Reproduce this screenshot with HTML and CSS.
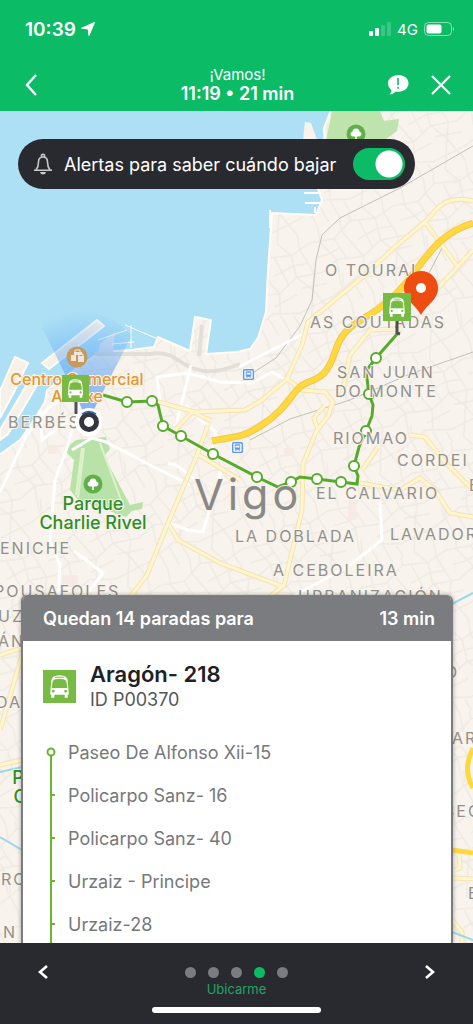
FILE: index.html
```
<!DOCTYPE html>
<html lang="es">
<head>
    <meta charset="utf-8">
    <meta name="viewport" content="width=device-width, initial-scale=1">
    <title>¡Vamos! - 21 min</title>
    <link rel="stylesheet" href="styles.css">
</head>
<body>

<header class="top">
    <div class="status">
        <span class="clock">10:39
            <svg width="14" height="14" viewBox="0 0 14 14"><path d="M13.500.5 8 13.500 7.200 7 .5 6.200Z" fill="#fff" stroke="#fff"/></svg>
        </span>
        <span class="signal">
            <svg width="22" height="14" viewBox="0 0 22 14" fill="#fff">
                <rect x="0" y="9" width="4" height="5" rx="1"/>
                <rect x="6" y="6" width="4" height="8" rx="1"/>
                <rect x="12" y="3" width="4" height="11" rx="1" opacity=".2"/>
                <rect x="18" y="0" width="4" height="14" rx="1" opacity=".2"/>
            </svg>
            4G
            <svg width="31" height="14" viewBox="0 0 31 14">
                <rect x=".5" y=".5" width="27" height="13" rx="4" fill="none" stroke="#fff" opacity=".5"/>
                <rect x="2.500" y="2.500" width="15" height="9" rx="2" fill="#fff"/>
                <path d="M29 5q2 2 0 4z" fill="#fff" opacity=".6"/>
            </svg>
        </span>
    </div>
    <div class="bar">
        <button class="icon-btn" type="button" aria-label="Atrás">
            <svg width="14" height="22" viewBox="0 0 14 22"><path d="M12 1 3 11 12 21" fill="none" stroke="#fff" stroke-width="2.400"/></svg>
        </button>
        <h1 class="title"><small>¡Vamos!</small>11:19 • 21 min</h1>
        <div class="actions">
            <button class="icon-btn" type="button" aria-label="Informar">
                <svg width="22" height="22" viewBox="0 0 22 22">
                    <path d="M11.500 1C17.500 1 21.500 4.700 21.500 9.300s-4 8.400-10 8.400q-1.500 0-2.500-.2-2.400 2.500-6.500 3 2-2 2-4.500Q1 13.500 1 9.300C1 4.700 5.500 1 11.500 1Z" fill="#fff"/>
                    <path d="M11 4V11M11 12.800v2" stroke="#0cbb66" stroke-width="1.600"/>
                </svg>
            </button>
            <button class="icon-btn" type="button" aria-label="Cerrar">
                <svg width="20" height="20" viewBox="0 0 20 20"><path d="M1 1 19 19M19 1 1 19" stroke="#fff" stroke-width="2.200"/></svg>
            </button>
        </div>
    </div>
</header>

<main class="screen">
    <svg class="map" viewBox="0 111 473 832" preserveAspectRatio="xMidYMin slice">
        <defs>
            <pattern id="streets" width="92" height="84" patternUnits="userSpaceOnUse" patternTransform="rotate(-24)">
                <path d="M0 12 24 18 46 8 70 16 92 12M0 44 18 38 44 46 66 38 92 44M0 70 30 62 54 72 92 70M14 0 10 16 18 38 12 62 14 84M38 0 34 14 44 46 36 66 38 84M62 0 70 16 66 38 76 56 62 84M84 0 80 14 84 42 76 56 84 84M24 18 28 42M54 12 56 42M34 56 60 54M0 28 14 30 26 28M46 28 68 26 82 30M18 52 14 64M66 50 92 56M24 64 26 84M48 72 50 84M48 0 46 8" fill="none" stroke="#eeeae3" stroke-width="1.500"/>
            </pattern>
            <radialGradient id="cone" gradientUnits="userSpaceOnUse" cx="88" cy="421" r="110">
                <stop offset="0" stop-color="#4a8ff0" stop-opacity=".7"/>
                <stop offset=".6" stop-color="#56a0f5" stop-opacity=".45"/>
                <stop offset="1" stop-color="#56a0f5" stop-opacity="0"/>
            </radialGradient>
            <symbol id="bus" viewBox="0 0 32 32">
                <rect width="32" height="32" fill="#78bb43"/>
                <path d="M8 11Q8 5 16 5T24 11L25 23Q25 24 24 24H8Q7 24 7 23Z" fill="#fff"/>
                <path d="M10 10.500Q12 9 16 9T22 10.500L23 17H9ZM12 7H20" fill="#78bb43" stroke="#78bb43" stroke-width="1"/>
                <path d="M9.500 23V27M22.500 23V27" stroke="#fff" stroke-width="3"/>
                <circle cx="10" cy="20.500" r="1.300" fill="#78bb43"/>
                <circle cx="22" cy="20.500" r="1.300" fill="#78bb43"/>
            </symbol>
            <symbol id="tree" viewBox="0 0 20 20">
                <circle cx="10" cy="10" r="9.500" fill="#5fb04a"/>
                <path d="M9 16 9.300 12.500Q5 13 4.500 10 4.500 8 6.500 7.500 7 4.500 10 4.500T13.500 7.500Q15.500 8 15.500 10 15 13 10.700 12.500L11 16Z" fill="#fff"/>
            </symbol>
            <symbol id="station" viewBox="0 0 12 12">
                <rect width="12" height="12" rx="2" fill="#5b98f2"/>
                <rect x="1.500" y="1.500" width="9" height="9" rx="1" fill="#fff"/>
                <path d="M3.500 3H8.500V8H3.500ZM3.500 10 5 8.500M8.500 10 7 8.500" fill="#5b98f2" stroke="#5b98f2"/>
                <path d="M4 4H8V6H4Z" fill="#fff"/>
            </symbol>
            <symbol id="first-stop" viewBox="0 0 16 43">
                <path d="M8 22V43" stroke="#6ab536" stroke-width="2"/>
                <circle cx="8" cy="21" r="3.500" fill="#fff" stroke="#6ab536" stroke-width="2"/>
            </symbol>
            <symbol id="next-stop" viewBox="0 0 16 43">
                <path d="M8 0V43M8 21H12" stroke="#6ab536" stroke-width="2"/>
            </symbol>
        </defs>

        <rect y="111" width="473" height="832" fill="#f8f4ed"/>
        <rect y="111" width="473" height="832" fill="url(#streets)"/>

        <!-- sea -->
        <path d="M-5 105H333L324 128 325 150 318 189 322 200 316 215 272 213 268 270 266 312 258 338 250 349 237 352 206 354 211 320 195 317 190 351 158 337 154 347 131 350 100 352 66 376 47 390 45 402 34 420 20 440 -5 458Z" fill="#ade0f5" stroke="#fffdf8" stroke-width="2"/>
        <path d="M270 228V210M315 213V207M304 193H320M305 203H320" fill="none" stroke="#fff" stroke-width="2"/>
        <path d="M303 140 305 122 311 123 317 140Z" fill="#f8f4ed"/>
        <path d="M42 363 97 320 104 326 49 369ZM15 357 28 363 14 392 0 418V391ZM26 386 34 375 40 380 8 434 0 440V430Z" fill="#f5f0e8" stroke="#fffdf8" stroke-width="2"/>
        <path d="M100 344 115 332 113 352 98 352Z" fill="#e0e4ed"/>
        <path d="M125 325 158 339M131 325V348M98 340 127 330M112 344 134 342" fill="none" stroke="#fff" stroke-width="1"/>
        <path d="M199 356 202 325M95 354H150Q166 351 178 360T204 371 240 364" fill="none" stroke="#e3dfd8" stroke-width="4"/>

        <!-- parks -->
        <path d="M332 111H380L384 121 399 119 397 131 386 139 350 150H324Z" fill="#bfe3ac"/>
        <path d="M64 450 76 440 106 437 110 449 104 456 130 505 143 502 142 509 132 511 126 517 78 500 70 490 74 460Z" fill="#b9e2a9"/>
        <path d="M76 495 82 448M100 443 124 508M84 448 78 498" fill="none" stroke="#dff0cf" stroke-width="2"/>
        <path d="M48 445h9v9h-9zM284 448h10v8h-10zM348 500h8v20h-8zM62 575h16v12h-16z" fill="#f7eae5"/>

        <!-- railway -->
        <path d="M473 146 400 188 340 218 322 235 316 260 312 300 300 326 276 358 254 372M250 440 290 419 350 400 410 374 473 352M428 275 442 248" fill="none" stroke="#c2c0bc" stroke-width="1"/>

        <g class="white-roads">
            <path d="M0 492 26 436 48 408 66 395M80 400 68 445 55 480 50 540 60 565 58 600M40 410 42 440 62 425 76 416M72 450 92 438 106 442 148 464 190 485M168 463 176 465 194 478"/>
            <path d="M160 402 157 377 188 373 220 382 252 383 272 372 286 380M175 430 191 365M186 405 206 425 216 432 212 450M169 523 188 530 203 532 222 468"/>
            <path d="M239 367 305 333 296 357 286 380M380 502 382 540 350 565 290 598M74 551 103 573 86 595"/>
        </g>
        <g class="road-edge">
            <path id="roads" d="M473 201Q448 195 435 211L425 222 395 247 365 275 308 322 302 345 287 379 262 400 245 410 195 412 155 401M425 222 458 267M473 250 440 286 425 300M402 329 370 330 350 355 342 395M287 379 302 390 325 392 333 402 328 416 316 432 303 464 302 510 284 585 260 605M318 430 314 418 325 405M175 430 192 412 212 421M168 523 197 455 208 425M168 523 178 540 220 563 284 587M168 523 147 575 128 600M199 455 240 480M410 435 425 437 445 462 473 490M360 483 400 490 420 478 435 490 450 513 473 517M362 470 378 447M0 655 22 648M0 730 22 655M0 765 22 760M455 870 460 868 459 855M453 878 473 879M452 920 462 932 462 943"/>
        </g>
        <use href="#roads" class="road-fill"/>
        <path d="M473 223C430 236 422 270 393 297S345 320 335 352 310 378 300 387 285 410 262 425 233 436 212 441" fill="none" stroke="#f3c650" stroke-width="7"/>
        <path d="M473 223C430 236 422 270 393 297S345 320 335 352 310 378 300 387 285 410 262 425 233 436 212 441M473 748Q462 770 473 788M452 850 473 853" fill="none" stroke="#ffd83e" stroke-width="5"/>
        <path d="M452 604 473 593M0 772 22 767M0 837 22 850M452 932 473 940" fill="none" stroke="#9cd8e8" stroke-width="2"/>

        <path d="M88 421 36 315Q90 295 132 335Z" fill="url(#cone)"/>
        <use href="#station" x="243" y="369" width="11" height="11"/>
        <use href="#station" x="232" y="442" width="11" height="11"/>
        <use href="#tree" x="346" y="124" width="20" height="20"/>
        <use href="#tree" x="83" y="474" width="20" height="20"/>
        <circle cx="77" cy="357" r="10.500" fill="#c79a5c"/>
        <path d="M71 355H76V361H71ZM78 356H84V362H78ZM74 352H82V355H74Z" fill="#eee7df"/>
        <path d="M75 353V350H80V353M79 356V354H83V356" fill="none" stroke="#eee7df"/>

        <!-- route -->
        <path d="M103 395 127 402 152 401 158 405 163 426 181 436 213 454 257 477 278 487 291 482 300 477 317 479 341 482 357 484 358 476 354 466 359 447 366 431 372 416 373 405 369 394 366 371 376 358 398 333" fill="none" stroke="#58aa2c" stroke-width="3"/>
        <g class="stops">
            <circle cx="127" cy="402" r="5"/><circle cx="152" cy="401" r="5"/>
            <circle cx="163" cy="426" r="5"/><circle cx="181" cy="436" r="5"/>
            <circle cx="213" cy="454" r="5"/><circle cx="257" cy="477" r="5"/>
            <circle cx="291" cy="482" r="5"/><circle cx="317" cy="479" r="5"/>
            <circle cx="341" cy="482" r="5"/><circle cx="354" cy="466" r="5"/>
            <circle cx="366" cy="431" r="5"/><circle cx="369" cy="394" r="5"/>
            <circle cx="376" cy="358" r="5"/>
        </g>

        <g class="district">
            <text x="325" y="276">O TOURAL</text>
            <text x="310" y="328">AS COUTADAS</text>
            <text x="337" y="378">SAN JUAN</text>
            <text x="335" y="397">DO MONTE</text>
            <text x="333" y="444">RIOMAO</text>
            <text x="397" y="466">CORDEI</text>
            <text x="316" y="499">EL CALVARIO</text>
            <text x="469" y="491">E</text>
            <text x="235" y="542">LA DOBLADA</text>
            <text x="390" y="540">LAVADOR</text>
            <text x="273" y="576">A CEBOLEIRA</text>
            <text x="298" y="602">URBANIZACIÓN</text>
            <text x="8" y="428">BERBÉS</text>
            <text x="0" y="554">ENICHE</text>
            <text x="-6" y="597">POUSAFOLES</text>
            <text x="-2" y="622">UZ</text>
            <text x="-2" y="647">ÁN</text>
            <text x="-4" y="708">DA</text>
            <text x="1" y="885">RO</text>
            <text x="3" y="938">N</text>
            <text x="445" y="678">O</text>
            <text x="452" y="744">AR</text>
            <text x="444" y="817">SEO</text>
            <text x="468" y="899">E</text>
        </g>
        <g class="park">
            <text x="93" y="510">Parque</text>
            <text x="93" y="529">Charlie Rivel</text>
            <text x="18" y="784">P</text>
            <text x="20" y="803">C</text>
        </g>
        <g class="mall">
            <text x="77" y="385">Centro Comercial</text>
            <text x="77" y="402">A Laxe</text>
        </g>
        <text class="city" x="194" y="510">Vigo</text>

        <path d="M76 402V414M397 321V333L400 334" fill="none" stroke="#505155" stroke-width="3"/>
        <use href="#bus" x="62" y="375" width="27" height="27"/>
        <path d="M421 315C415 304 404 300 404 288A17 17 0 0 1 438 288C438 300 427 304 421 315Z" fill="#ee4c10"/>
        <circle cx="421" cy="288" r="5" fill="#fff"/>
        <use href="#bus" x="383" y="293" width="28" height="28"/>
        <circle cx="89" cy="422" r="14" fill="#fff"/>
        <circle cx="89" cy="422" r="7.500" fill="#fff" stroke="#33363f" stroke-width="5"/>
        <path d="M82 414Q89 409 96 414" fill="none" stroke="#1e5fa8" stroke-width="1.500"/>
    </svg>

    <div class="panels">
        <label class="alert">
            <svg width="20" height="22" viewBox="0 0 20 22" fill="none" stroke="#c9c9cc" stroke-width="1.600">
                <path d="M1 17.200H19M3 17Q5.500 14 5.500 9 5.500 4 10 4T14.500 9Q14.500 14 17 17M8.500 4V2Q10 .5 11.500 2V4"/>
                <path d="M7 19H13Q12.500 21.500 10 21.500T7 19Z" fill="#c9c9cc" stroke="none"/>
            </svg>
            <span>Alertas para saber cuándo bajar</span>
            <input class="toggle" type="checkbox" checked>
        </label>

        <section class="card">
            <div class="card-head"><span>Quedan 14 paradas para</span><span>13 min</span></div>
            <div class="stop">
                <svg width="33" height="33"><use href="#bus"/></svg>
                <div>
                    <h2>Aragón- 218</h2>
                    <p>ID P00370</p>
                </div>
            </div>
            <ol class="route">
                <li><svg width="16" height="43"><use href="#first-stop"/></svg>Paseo De Alfonso Xii-15</li>
                <li><svg width="16" height="43"><use href="#next-stop"/></svg>Policarpo Sanz- 16</li>
                <li><svg width="16" height="43"><use href="#next-stop"/></svg>Policarpo Sanz- 40</li>
                <li><svg width="16" height="43"><use href="#next-stop"/></svg>Urzaiz - Principe</li>
                <li><svg width="16" height="43"><use href="#next-stop"/></svg>Urzaiz-28</li>
            </ol>
        </section>
    </div>
</main>

<footer class="bottom">
    <button class="icon-btn" type="button" aria-label="Anterior">
        <svg width="12" height="16" viewBox="0 0 12 16"><path d="M10 2 3 8 10 14" fill="none" stroke="#fff" stroke-width="2.600"/></svg>
    </button>
    <div class="steps">
        <div class="dots">
            <button type="button" aria-label="Paso 1"></button>
            <button type="button" aria-label="Paso 2"></button>
            <button type="button" aria-label="Paso 3"></button>
            <button type="button" aria-label="Paso 4" class="current"></button>
            <button type="button" aria-label="Paso 5"></button>
        </div>
        <button class="locate" type="button">Ubicarme</button>
        <div class="home"></div>
    </div>
    <button class="icon-btn" type="button" aria-label="Siguiente">
        <svg width="12" height="16" viewBox="0 0 12 16"><path d="M2 2 9 8 2 14" fill="none" stroke="#fff" stroke-width="2.600"/></svg>
    </button>
</footer>

</body>
</html>
```
FILE: styles.css
```
* {
    box-sizing: border-box;
}
body {
    margin: 0;
    height: 100vh;
    display: flex;
    flex-direction: column;
    font-family: Inter, "Liberation Sans", sans-serif;
    background: #292a2f;
}
h1, h2, p, ol {
    margin: 0;
    padding: 0;
}
svg {
    display: block;
    flex: none;
}
button {
    border: 0;
    padding: 0;
    background: none;
    font: inherit;
}

/* header */
.top {
    background: #0cbb66;
    color: #fff;
}
.status {
    display: flex;
    justify-content: space-between;
    align-items: center;
    height: 58px;
    padding: 0 18px 0 25px;
}
.clock, .signal {
    display: flex;
    align-items: center;
    gap: 5px;
}
.clock {
    font-size: 19px;
    font-weight: 600;
}
.signal {
    gap: 6px;
    font-size: 15px;
}
.bar {
    display: grid;
    grid-template-columns: 1fr auto 1fr;
    align-items: center;
    height: 53px;
    padding: 0 22px 0 24px;
}
.icon-btn {
    display: block;
}
.title {
    font-size: 18px;
    font-weight: 600;
    line-height: 20px;
    text-align: center;
}
.title small {
    display: block;
    font-size: 15px;
    font-weight: 400;
    line-height: 18px;
}
.actions {
    display: flex;
    justify-content: flex-end;
    align-items: center;
    gap: 22px;
}

/* map */
.screen {
    flex: 1;
    min-height: 0;
    display: grid;
    grid-template: 100% / 100%;
    overflow: hidden;
}
.map, .panels {
    grid-area: 1 / 1;
}
.map {
    width: 100%;
    height: 100%;
}
.white-roads path {
    fill: none;
    stroke: #fff;
    stroke-width: 3px;
}
.road-edge {
    fill: none;
    stroke: #f5e3b2;
    stroke-width: 5px;
}
.road-fill {
    fill: none;
    stroke: #fff6cf;
    stroke-width: 3px;
}
.stops circle {
    fill: #fff;
    stroke: #58aa2c;
    stroke-width: 2px;
}
.map text {
    paint-order: stroke;
    stroke: #f8f4ed;
    stroke-width: 2px;
    stroke-linejoin: round;
}
.district {
    font-size: 16px;
    letter-spacing: 2px;
    fill: #92908c;
}
.park, .mall {
    font-weight: 500;
    text-anchor: middle;
}
.park {
    font-size: 18px;
    fill: #2e8f25;
}
.mall {
    font-size: 16px;
    fill: #e8962e;
}
.city {
    font-size: 43px;
    letter-spacing: 4px;
    fill: #8a8883;
}

/* alert and card */
.panels {
    min-height: 0;
    display: flex;
    flex-direction: column;
    justify-content: space-between;
    align-items: flex-start;
    padding-top: 28px;
}
.alert {
    display: flex;
    align-items: center;
    gap: 11px;
    height: 50px;
    margin-left: 18px;
    padding: 0 10px 0 15px;
    border-radius: 25px;
    background: #292a2f;
    color: #fff;
    font-size: 18px;
    white-space: nowrap;
}
.toggle {
    appearance: none;
    width: 52px;
    height: 32px;
    margin: 0 0 0 6px;
    border-radius: 16px;
    background: #77787c;
}
.toggle:checked {
    background: radial-gradient(circle at 36px 16px, #fff 13px, #0cbb66 14px);
}
.card {
    display: flex;
    flex-direction: column;
    align-self: stretch;
    max-height: 348px;
    margin: 0 20px 0 21px;
    border: solid #7b7c7f;
    border-width: 0 2px;
    border-radius: 6px 6px 0 0;
    background: #fff;
    box-shadow: 0 0 4px rgba(0, 0, 0, .35);
    overflow: hidden;
}
.card-head {
    flex: none;
    display: flex;
    justify-content: space-between;
    align-items: center;
    height: 46px;
    padding: 0 16px 0 20px;
    background: #7b7c7f;
    color: #fff;
    font-size: 18px;
    font-weight: 600;
}
.stop {
    flex: none;
    display: flex;
    align-items: center;
    gap: 14px;
    height: 90px;
    padding: 0 20px;
}
.stop h2 {
    color: #202125;
    font-size: 22px;
    font-weight: 600;
    line-height: 28px;
}
.stop p {
    color: #55565a;
    font-size: 18px;
    line-height: 24px;
}
.route {
    min-height: 0;
    padding-left: 20px;
    list-style: none;
    color: #77787b;
    font-size: 18px;
    overflow: hidden;
}
.route li {
    display: flex;
    align-items: center;
    gap: 9px;
    height: 43px;
}

/* footer */
.bottom {
    flex: none;
    display: flex;
    justify-content: space-between;
    align-items: flex-start;
    height: 81px;
    padding: 0 37px;
}
.bottom .icon-btn {
    padding-top: 21px;
}
.steps {
    display: flex;
    flex-direction: column;
    align-items: center;
    padding-top: 24px;
}
.dots {
    display: flex;
    gap: 12px;
}
.dots button {
    width: 11px;
    height: 11px;
    border-radius: 50%;
    background: #7b7c80;
}
.dots .current {
    background: #0cbb66;
}
.locate {
    color: #1fa566;
    font-size: 13px;
    line-height: 22px;
}
.home {
    width: 169px;
    height: 6px;
    margin-top: 7px;
    border-radius: 3px;
    background: #fff;
}
```
